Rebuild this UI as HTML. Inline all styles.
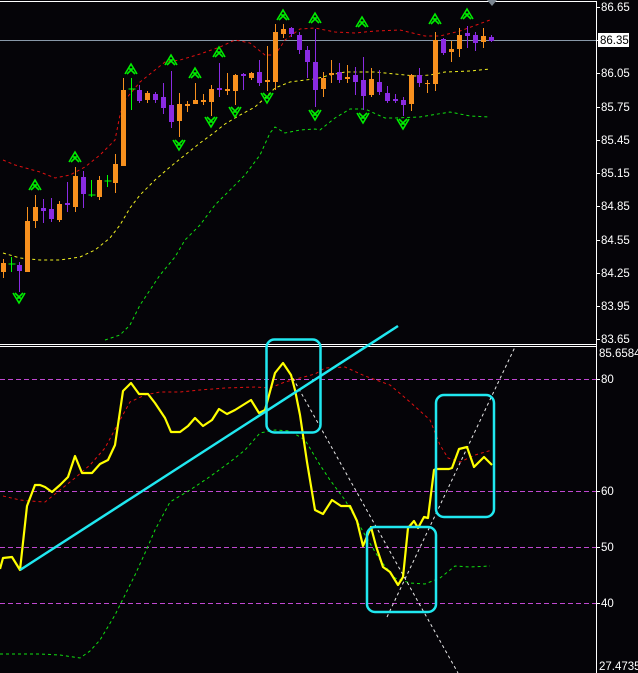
<!DOCTYPE html>
<html><head><meta charset="utf-8"><style>
html,body{margin:0;padding:0;background:#050408;}
svg{display:block}
text{font-family:"Liberation Sans",sans-serif;font-size:11.5px;fill:#fff}
</style></head><body>
<svg width="638" height="673" viewBox="0 0 638 673" xmlns="http://www.w3.org/2000/svg">
<rect width="638" height="673" fill="#050408"/>
<g stroke="#fff" stroke-width="1" fill="none">
<path d="M0 1.5H596.5V673"/>
<path d="M0 344.5H596.5M0 346.5H596.5"/>
<path d="M596 7.5H600M596 40.5H600M596 73.5H600M596 107.5H600M596 140.5H600M596 173.5H600M596 206.5H600M596 240.5H600M596 273.5H600M596 306.5H600M596 339.5H600M596 379.5H600M596 491.5H600M596 547.5H600M596 603.5H600"/>
</g>
<polygon points="487,0 497,0 492,6" fill="#7a8590"/>
<path d="M0 40.5H596" stroke="#8898a8" stroke-width="1"/>
<g fill="none" stroke-width="1" stroke-dasharray="3,3">
<polyline stroke="#e01010" points="3,160 15,165 40,172 55,178 70,175 85,167 100,155 115,140 120,115 125,100 140,82 155,70 165,62 180,60 200,54 220,47 235,40 250,43 265,55 275,55 285,40 300,29 315,28 335,32 355,33 375,31 400,30 425,36 440,36 460,31 490,20"/>
<polyline stroke="#f0f020" points="3,253 20,258 40,260 60,260 80,257 95,250 110,238 120,225 130,208 140,195 155,180 170,167 185,155 200,143 215,132 225,124 240,115 255,107 265,98 275,88 290,82 305,80 315,79 330,75 345,72 360,72 375,72 395,74 415,76 430,75 445,72 470,71 490,69"/>
<polyline stroke="#10e010" points="105,340 120,335 130,325 140,305 150,290 160,275 175,257 185,240 200,225 215,205 230,190 245,175 260,155 270,133 275,127 285,133 300,130 315,129 320,130 335,118 350,109 365,109 385,118 395,118 420,117 450,112 470,116 490,117"/>
</g>
<g transform="translate(0.5,0)" stroke-width="1" fill="none">
<path stroke="#f7901e" d="M3 259V278M27 207V272M35 195V228M59 201V222M75 167V212M99 176V200M115 154V193M123 78V166M147 91V103M179 93V137M187 101V112M195 83V104M203 94V105M211 85V116M227 73V95M235 74V105M251 72V80M267 46V91M275 24V90M283 24V38M323 72V97M331 60V83M347 65V83M371 68V97M411 74V111M427 80V93M435 32V91M451 41V62M459 28V57M483 28V48"/>
<path stroke="#8a2be2" d="M19 262V292M43 199V223M51 198V222M67 182V212M83 171V208M139 85V103M155 92V103M163 83V114M171 71V128M219 63V97M243 73V90M259 60V86M291 27V37M299 32V54M307 46V78M315 29V107M339 63V83M355 67V95M363 57V110M379 70V95M387 86V103M395 94V103M403 97V116M419 68V87M443 38V55M467 26V48M475 32V51M491 35V42"/>
<path stroke="#00ff00" d="M11 257V272M8 264H15M91 180V197M88 195H95M107 175V187M104 181H111M131 78V110M128 89H135"/>
</g>
<g fill="#f7901e">
<rect x="1" y="263" width="5" height="9"/><rect x="25" y="221" width="5" height="51"/><rect x="33" y="207" width="5" height="14"/><rect x="57" y="204" width="5" height="16"/><rect x="73" y="176" width="5" height="31"/><rect x="97" y="180" width="5" height="17"/><rect x="113" y="164" width="5" height="19"/><rect x="121" y="90" width="5" height="76"/><rect x="145" y="93" width="5" height="7"/><rect x="177" y="104" width="5" height="17"/><rect x="185" y="104" width="5" height="2"/><rect x="193" y="100" width="5" height="4"/><rect x="201" y="100" width="5" height="2"/><rect x="209" y="89" width="5" height="13"/><rect x="225" y="89" width="5" height="2"/><rect x="233" y="75" width="5" height="16"/><rect x="249" y="73" width="5" height="5"/><rect x="265" y="80" width="5" height="2"/><rect x="273" y="32" width="5" height="50"/><rect x="281" y="29" width="5" height="5"/><rect x="321" y="78" width="5" height="11"/><rect x="329" y="73" width="5" height="2"/><rect x="345" y="77" width="5" height="2"/><rect x="369" y="79" width="5" height="16"/><rect x="409" y="75" width="5" height="29"/><rect x="425" y="83" width="5" height="1"/><rect x="433" y="40" width="5" height="44"/><rect x="449" y="49" width="5" height="3"/><rect x="457" y="35" width="5" height="14"/><rect x="481" y="36" width="5" height="6"/>
</g>
<g fill="#8a2be2">
<rect x="17" y="265" width="5" height="6"/><rect x="41" y="208" width="5" height="3"/><rect x="49" y="209" width="5" height="10"/><rect x="65" y="203" width="5" height="2"/><rect x="81" y="177" width="5" height="17"/><rect x="137" y="90" width="5" height="11"/><rect x="153" y="94" width="5" height="6"/><rect x="161" y="97" width="5" height="11"/><rect x="169" y="105" width="5" height="17"/><rect x="217" y="88" width="5" height="2"/><rect x="241" y="74" width="5" height="2"/><rect x="257" y="72" width="5" height="11"/><rect x="289" y="28" width="5" height="6"/><rect x="297" y="35" width="5" height="15"/><rect x="305" y="50" width="5" height="12"/><rect x="313" y="62" width="5" height="28"/><rect x="337" y="72" width="5" height="8"/><rect x="353" y="75" width="5" height="7"/><rect x="361" y="80" width="5" height="16"/><rect x="377" y="82" width="5" height="10"/><rect x="385" y="93" width="5" height="8"/><rect x="393" y="99" width="5" height="2"/><rect x="401" y="100" width="5" height="5"/><rect x="417" y="75" width="5" height="8"/><rect x="441" y="39" width="5" height="14"/><rect x="465" y="33" width="5" height="3"/><rect x="473" y="35" width="5" height="8"/><rect x="489" y="37" width="5" height="4"/>
</g>
<defs>
<path id="up" d="M-6 5L0 -5L6 5M-4 5L0 1L4 5M-2 0H2" fill="none" stroke="#00ee00" stroke-width="1.6"/>
<path id="dn" d="M-6 -5L0 5L6 -5M-4 -5L0 -1L4 -5M-2 0H2" fill="none" stroke="#00ee00" stroke-width="1.6"/>
</defs>
<use href="#up" x="35" y="185"/><use href="#up" x="75" y="157"/><use href="#up" x="131" y="69"/><use href="#up" x="171" y="60"/><use href="#up" x="195" y="73"/><use href="#up" x="219" y="52"/><use href="#up" x="283" y="15"/><use href="#up" x="315" y="18"/><use href="#up" x="362" y="22"/><use href="#up" x="435" y="19"/><use href="#up" x="467" y="14"/>
<use href="#dn" x="19" y="298"/><use href="#dn" x="179" y="145"/><use href="#dn" x="211" y="122"/><use href="#dn" x="235" y="112"/><use href="#dn" x="267" y="98"/><use href="#dn" x="315" y="115"/><use href="#dn" x="363" y="118"/><use href="#dn" x="403" y="124"/>
<g stroke="#c048d0" stroke-width="1" stroke-dasharray="5,3">
<path d="M0 379.5H596M0 491.5H596M0 547.5H596M0 603.5H596"/>
</g>
<g fill="none" stroke-width="1" stroke-dasharray="3,3">
<polyline stroke="#e01010" points="3,496 20,500 30,501 45,502 60,490 75,478 90,465 105,448 120,420 130,402 145,395 160,392 180,392 200,390 225,388 255,387 270,388 285,382 300,378 315,374 325,368 345,367 365,376 390,385 410,402 430,420 440,445 448,458 460,462 475,455 492,450"/>
<polyline stroke="#10e010" points="0,654 40,654 60,655 80,658 90,651 100,640 115,615 125,595 135,575 145,553 155,530 170,502 190,490 205,480 215,473 230,462 245,450 260,433 275,430 290,431 305,440 320,465 330,480 345,500 365,535 380,560 395,578 410,583 425,584 440,578 455,566 470,567 490,566"/>
<path stroke="#e8e8e8" d="M290 373L458 673M387 617L515 347"/>
</g>
<polyline fill="none" stroke="#ffff00" stroke-width="2.2" stroke-linejoin="round" points="0,569 3,558 12,557 20,570 27,506 35,485 40,485 45,487 52,492 60,485 68,477 75,456 82,473 92,473 100,464 108,460 115,445 123,391 131,383 139,394 148,394 155,403 165,418 171,432 180,432 188,426 195,418 203,426 212,420 219,409 227,414 235,410 251,400 259,413 265,410 275,373 283,363 291,375 295,390 300,415 307,462 315,510 323,514 332,500 341,506 350,506 357,521 363,546 371,527 376,546 383,567 390,572 398,585 403,577 408,528 414,521 418,528 424,517 428,518 434,470 436,469 449,469 452,468 459,449 467,447 474,467 484,457 492,465"/>
<g fill="none" stroke="#20e8f0" stroke-width="2.5">
<path d="M20 570L398 326"/>
<rect x="266.5" y="339.5" width="54" height="93" rx="8"/>
<rect x="367" y="527" width="69" height="85" rx="8"/>
<rect x="436" y="395" width="58" height="122" rx="8"/>
</g>
<text x="601" y="11">86.65</text>
<rect x="598" y="33" width="31" height="14" fill="#fff"/>
<text x="600" y="44" style="fill:#000">86.35</text>
<text x="601" y="77">86.05</text>
<text x="601" y="111">85.75</text>
<text x="601" y="144">85.45</text>
<text x="601" y="177">85.15</text>
<text x="601" y="210">84.85</text>
<text x="601" y="244">84.55</text>
<text x="601" y="277">84.25</text>
<text x="601" y="310">83.95</text>
<text x="601" y="343">83.65</text>
<text x="599" y="357">85.6584</text>
<text x="601" y="383">80</text>
<text x="601" y="495">60</text>
<text x="601" y="551">50</text>
<text x="601" y="607">40</text>
<text x="599" y="670">27.4735</text>
</svg>
</body></html>
